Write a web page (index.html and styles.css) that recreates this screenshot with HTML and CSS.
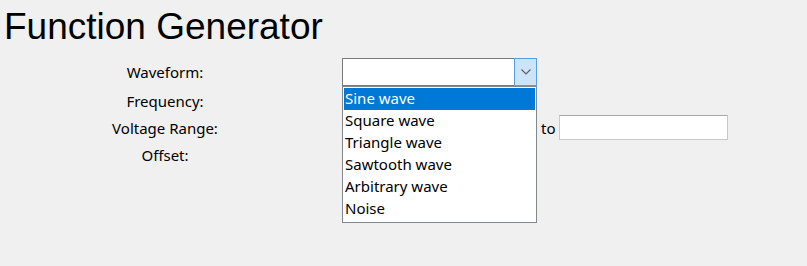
FILE: index.html
```html
<!DOCTYPE html>
<html>
<head>
<meta charset="utf-8">
<link rel="stylesheet" href="styles.css">
</head>
<body>
<h1 class="title">Function Generator</h1>
<div class="form">
  <div class="label">Waveform:</div>
  <div class="field">
    <div class="select">
      <div class="select-value"></div>
      <div class="select-btn">
        <svg width="10" height="6" viewBox="0 0 10 6"><path d="M0.5 0.5 L5 5 L9.5 0.5" fill="none" stroke="#606060" stroke-width="1.2"/></svg>
      </div>
      <ul class="listbox">
        <li class="option selected">Sine wave</li>
        <li class="option">Square wave</li>
        <li class="option">Triangle wave</li>
        <li class="option">Sawtooth wave</li>
        <li class="option">Arbitrary wave</li>
        <li class="option">Noise</li>
      </ul>
    </div>
  </div>
  <div class="label">Frequency:</div>
  <div class="field"><div class="input"></div></div>
  <div class="label">Voltage Range:</div>
  <div class="field range"><div class="input"></div><span class="to">to</span><div class="input small"></div></div>
  <div class="label">Offset:</div>
  <div class="field"><div class="input"></div></div>
</div>
</body>
</html>
```
FILE: styles.css
```css
html, body {
  margin: 0;
  padding: 0;
  background: #f0f0f0;
}
body {
  width: 807px;
  height: 266px;
  overflow: hidden;
  font-family: "Noto Sans", "Open Sans", sans-serif;
  font-size: 15px;
  color: #000;
}
.title {
  margin: 5px 0 0 4px;
  font-family: "Liberation Sans", Arial, sans-serif;
  font-weight: normal;
  font-size: 37px;
  line-height: 43px;
  height: 43px;
}
.form {
  margin-top: 10px;
  display: grid;
  grid-template-columns: 330px auto;
  column-gap: 12px;
  row-gap: 2px;
  align-items: center;
}
.label {
  text-align: center;
  line-height: 20px;
  color: #000;
}
.field {
  display: flex;
  align-items: center;
}
.select {
  position: relative;
  width: 195px;
  height: 28px;
  box-sizing: border-box;
  border: 1px solid #7a7a7a;
  background: #fff;
  display: flex;
}
.select-value {
  flex: 1;
}
.select-btn {
  width: 21px;
  margin: -1px -1px -1px 0;
  border: 1px solid #569de5;
  background: #cce4f7;
  display: flex;
  align-items: center;
  justify-content: center;
}
.listbox {
  position: absolute;
  left: -1px;
  top: 27px;
  width: 195px;
  box-sizing: border-box;
  margin: 0;
  padding: 1px 1px 2px 1px;
  list-style: none;
  background: #fff;
  border: 1px solid #828790;
  z-index: 2;
}
.option {
  height: 22px;
  line-height: 21px;
  padding-left: 1px;
  white-space: nowrap;
}
.option.selected {
  background: #0078d7;
  color: #fff;
}
.input {
  width: 195px;
  height: 25px;
  box-sizing: border-box;
  background: #fff;
  border: 1px solid #c9c9c9;
  border-top-color: #a8a8a8;
}
.to {
  margin: 0 3px 0 4px;
  line-height: 20px;
}
.input.small {
  width: 169px;
}
```
